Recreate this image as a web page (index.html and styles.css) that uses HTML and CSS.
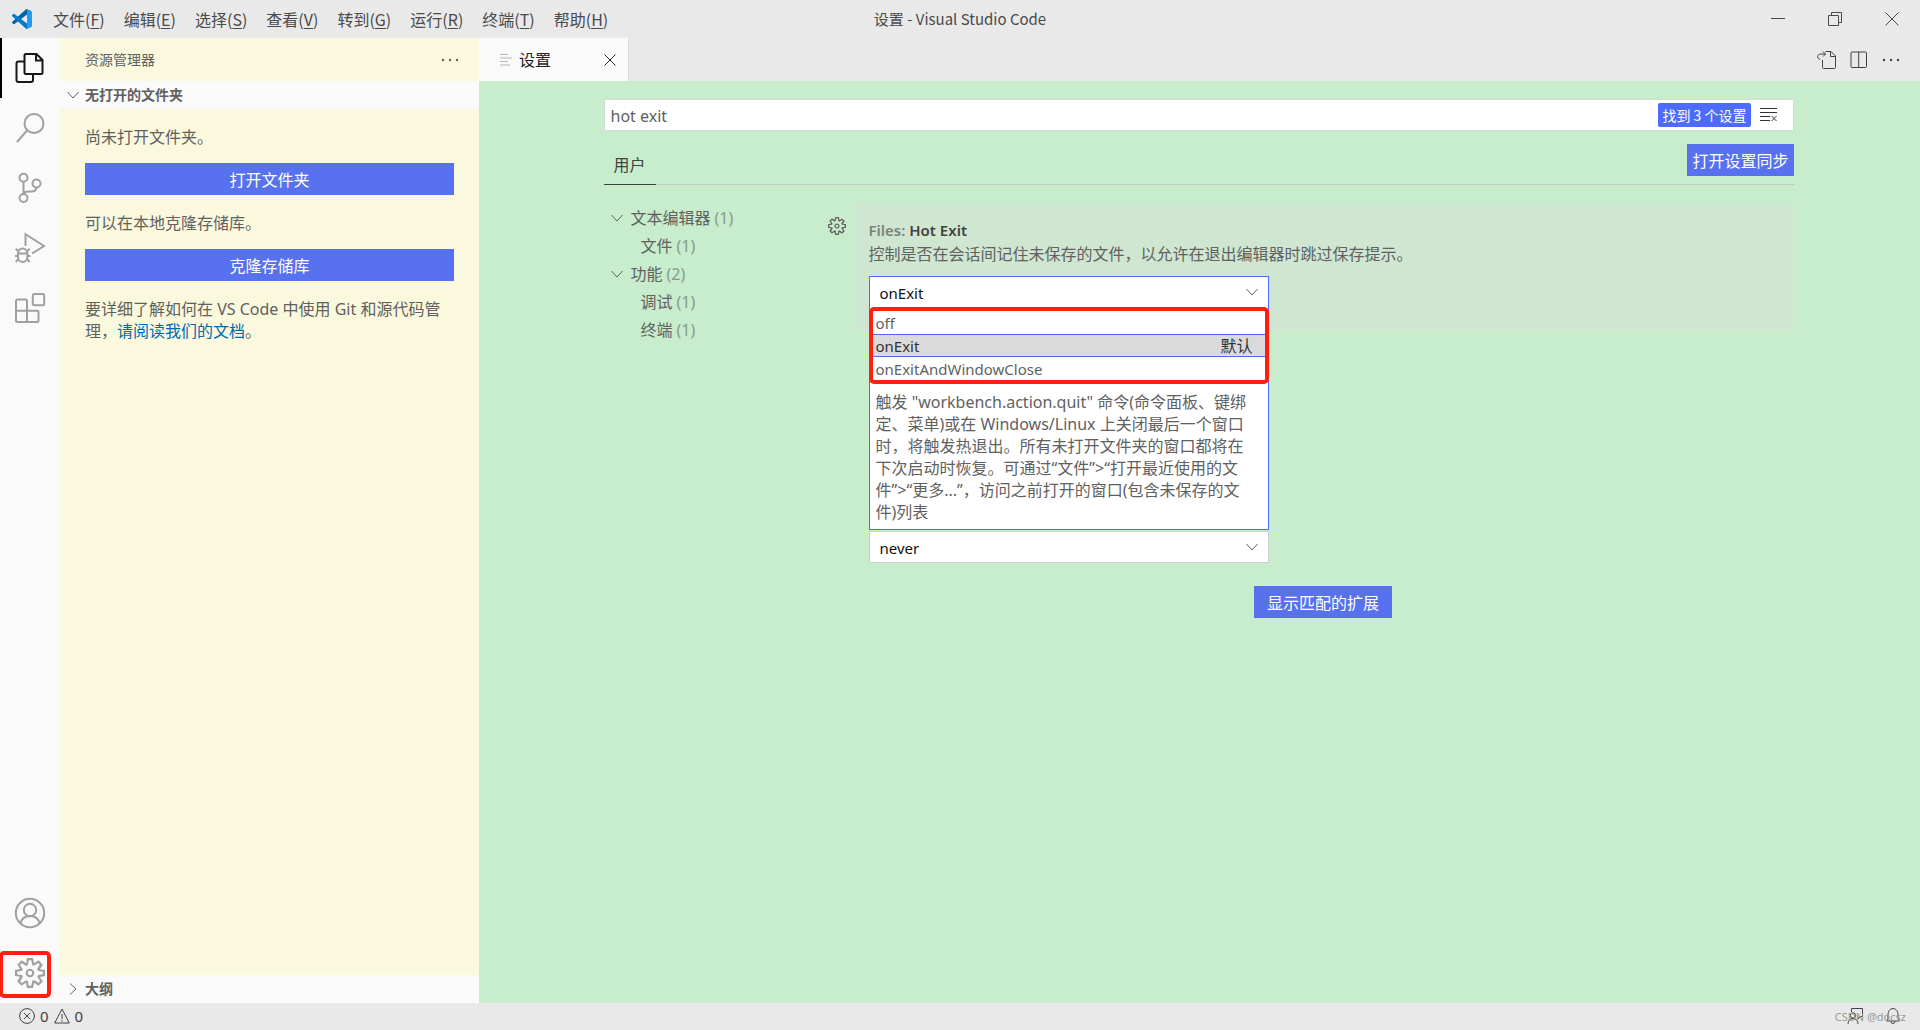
FILE: index.html
```html
<!DOCTYPE html>
<html lang="zh-CN">
<head>
<meta charset="utf-8">
<title>设置 - Visual Studio Code</title>
<link rel="stylesheet" href="styles.css">
</head>
<body>
<header class="titlebar">
  <div class="titlebar-left">
    <svg class="logo" viewBox="0 0 100 100" aria-hidden="true">
      <path fill="#0065a9" d="M96.46 10.8 75.86.88a6.25 6.25 0 0 0-7.11 1.2L1.3 63.58a4.17 4.17 0 0 0 0 6.17l5.51 5a4.17 4.17 0 0 0 5.32.24l81.23-61.62C96.09 11.3 100 13.25 100 16.67v-.24a6.25 6.25 0 0 0-3.54-5.63z"/>
      <path fill="#007acc" d="m96.46 89.2-20.6 9.92a6.25 6.25 0 0 1-7.11-1.2L1.3 36.42a4.17 4.17 0 0 1 0-6.17l5.51-5a4.17 4.17 0 0 1 5.32-.24l81.23 61.62c2.73 2.07 6.64.12 6.64-3.3v.24a6.25 6.25 0 0 1-3.54 5.63z"/>
      <path fill="#1f9cf0" d="M75.86 99.13a6.25 6.25 0 0 1-7.11-1.21C71.06 100.22 75 98.59 75 95.33V4.67c0-3.26-3.94-4.9-6.25-2.59a6.25 6.25 0 0 1 7.11-1.21l20.6 9.91a6.25 6.25 0 0 1 3.54 5.63v67.18a6.25 6.25 0 0 1-3.54 5.63z"/>
    </svg>
    <nav class="menu" aria-label="菜单">
      <button>文件(<u>F</u>)</button><button>编辑(<u>E</u>)</button><button>选择(<u>S</u>)</button><button>查看(<u>V</u>)</button><button>转到(<u>G</u>)</button><button>运行(<u>R</u>)</button><button>终端(<u>T</u>)</button><button>帮助(<u>H</u>)</button>
    </nav>
  </div>
  <div class="window-title">设置 - Visual Studio Code</div>
  <div class="window-controls">
    <button aria-label="最小化"><svg viewBox="0 0 14 14"><path d="M0 6.5h14"/></svg></button>
    <button aria-label="还原"><svg viewBox="0 0 14 14"><path d="M.5 3.5h10v10H.5zM3.5 3.500v-3h10v10h-3"/></svg></button>
    <button aria-label="关闭"><svg viewBox="0 0 14 14"><path d="m.5.5 13 13M13.500.5l-13 13"/></svg></button>
  </div>
</header>

<div class="workbench">
  <nav class="activitybar" aria-label="活动栏">
    <button class="active" aria-label="资源管理器"><svg viewBox="0 0 30 30"><path d="M11 1h10.500l6 6v12.500a1.500 1.500 0 0 1-1.500 1.500H11a1.500 1.500 0 0 1-1.500-1.500v-17A1.500 1.500 0 0 1 11 1zM21 1v6.500h6.500M9.500 8.500h-6a2 2 0 0 0-2 2V27a2 2 0 0 0 2 2H16a2 2 0 0 0 2-2v-6"/></svg></button>
    <button aria-label="搜索"><svg viewBox="0 0 30 30"><circle cx="19" cy="10.500" r="9.500"/><path d="M12 17.500 2 29"/></svg></button>
    <button aria-label="源代码管理"><svg viewBox="0 0 30 30"><circle cx="8.500" cy="4.800" r="4"/><circle cx="21.500" cy="10.500" r="4"/><circle cx="8.500" cy="25" r="4"/><path d="M8.500 9v12M21.500 14.500c-.5 3-2.500 4-5 4h-3c-2.500 0-4.500 1-5 2.500"/></svg></button>
    <button aria-label="运行和调试"><svg viewBox="0 0 30 30"><path d="M10.500 13V1.200L29 13l-12 7.500"/><path d="M3 20.500c0-3 2-5 4.700-5s4.700 2 4.700 5v3.500c0 3-2 5-4.700 5S3 27 3 24zM3 20.500h9.400M3.500 18.500.8 15.800M12 18.500l2.700-2.700M3 23H0M12.500 23h3M3.500 26 .8 29M12 26l2.700 3"/></svg></button>
    <button aria-label="扩展"><svg viewBox="0 0 30 30"><rect x="17.800" y="1" width="11.400" height="11.200" rx="1.500"/><path d="M2.500 6.500h8a1.500 1.500 0 0 1 1.500 1.500v9.800h10a1.500 1.500 0 0 1 1.500 1.500v8.200a1.500 1.500 0 0 1-1.500 1.500H2.500A1.500 1.500 0 0 1 1 27.500V8a1.500 1.500 0 0 1 1.500-1.500zM1 17.800h11V29"/></svg></button>
    <span class="spacer"></span>
    <button aria-label="帐户"><svg viewBox="0 0 30 30"><circle cx="15" cy="15" r="14.200"/><circle cx="15" cy="12" r="6.200"/><path d="M5.500 25.500c1-4.800 4.500-7.500 9.500-7.500s8.500 2.700 9.500 7.500"/></svg></button>
    <button class="manage" aria-label="管理"><svg class="solid" viewBox="1 1 14 14"><path d="M9.100 4.400 8.600 2H7.400l-.5 2.400-.7.3-2-1.300-.9.8 1.300 2-.2.7-2.400.5v1.200l2.400.5.3.8-1.300 2 .8.8 2-1.300.8.3.4 2.300h1.200l.5-2.400.8-.3 2 1.300.8-.8-1.300-2 .3-.8 2.300-.4V7.400l-2.400-.5-.3-.8 1.300-2-.8-.8-2 1.300-.7-.2zM9.400 1l.5 2.400L12 2.100l2 2-1.400 2.100 2.400.4v2.800l-2.400.5L14 12l-2 2-2.100-1.400-.5 2.400H6.600l-.5-2.400L4 13.900l-2-2 1.400-2.100L1 9.400V6.600l2.400-.5L2.100 4l2-2 2.100 1.400.4-2.400h2.800zm.6 7c0 1.100-.9 2-2 2s-2-.9-2-2 .9-2 2-2 2 .9 2 2zM8 9c.6 0 1-.4 1-1s-.4-1-1-1-1 .4-1 1 .4 1 1 1z"/></svg></button>
  </nav>

  <aside class="sidebar">
    <div class="sidebar-title"><h2>资源管理器</h2><button class="icon-button" aria-label="更多"><svg class="solid" viewBox="0 0 20 20"><circle cx="3" cy="10" r="1.200"/><circle cx="10" cy="10" r="1.200"/><circle cx="17" cy="10" r="1.200"/></svg></button></div>
    <button class="section"><svg viewBox="0 0 12 12"><path d="m.5 3 5.500 6 5.500-6"/></svg>无打开的文件夹</button>
    <div class="sidebar-body">
      <p>尚未打开文件夹。</p>
      <button class="primary">打开文件夹</button>
      <p>可以在本地克隆存储库。</p>
      <button class="primary">克隆存储库</button>
      <p>要详细了解如何在 VS Code 中使用 Git 和源代码管理，<a href="#docs">请阅读我们的文档</a>。</p>
    </div>
    <button class="section"><svg viewBox="0 0 12 12"><path d="m3 .5 6 5.500-6 5.500"/></svg>大纲</button>
  </aside>

  <main class="editor">
    <div class="tabs">
      <div class="tab">
        <svg class="tab-icon" viewBox="0 0 12 12"><path d="M0 .5h8M0 4h12M0 7.500h8M0 11h10"/></svg>
        <span>设置</span>
        <button aria-label="关闭选项卡"><svg viewBox="0 0 12 12"><path d="m.5.5 11 11M11.500.5l-11 11"/></svg></button>
      </div>
      <div class="tab-actions">
        <button class="icon-button" aria-label="打开设置(json)"><svg viewBox="0 0 20 20"><path d="M8.500 1.500H14l4.500 4.500v11.500a1 1 0 0 1-1 1h-11a1 1 0 0 1-1-1V10M13.500 1.500v5h5M3 9.500C-.5 8 0 4 4 4h4.500M6 1.500 8.500 4 6 6.500"/></svg></button>
        <button class="icon-button" aria-label="拆分编辑器"><svg viewBox="0 0 20 20"><rect x="2" y="2" width="15.500" height="15.500" rx="1"/><path d="M9.700 2v15.500"/></svg></button>
        <button class="icon-button" aria-label="更多操作"><svg class="solid" viewBox="0 0 20 20"><circle cx="3" cy="10" r="1.200"/><circle cx="10" cy="10" r="1.200"/><circle cx="17" cy="10" r="1.200"/></svg></button>
      </div>
    </div>

    <div class="settings">
      <div class="search">
        <input type="text" value="hot exit" aria-label="搜索设置">
        <span class="badge">找到 3 个设置</span>
        <button class="icon-button" aria-label="清除设置搜索输入"><svg viewBox="0 0 20 20"><path d="M1 3.500h17M1 7.500h17M1 11.500h10M1 15.500h10M12.500 11l5 5M17.500 11l-5 5"/></svg></button>
      </div>
      <div class="scope">
        <button class="scope-tab">用户</button>
        <button class="primary sync">打开设置同步</button>
      </div>
      <div class="settings-body">
        <ul class="toc">
          <li><svg viewBox="0 0 12 12"><path d="m.5 3 5.500 6 5.500-6"/></svg>文本编辑器 <span>(1)</span></li>
          <li class="child">文件 <span>(1)</span></li>
          <li><svg viewBox="0 0 12 12"><path d="m.5 3 5.500 6 5.500-6"/></svg>功能 <span>(2)</span></li>
          <li class="child">调试 <span>(1)</span></li>
          <li class="child">终端 <span>(1)</span></li>
        </ul>
        <div class="list">
          <section class="setting focused">
            <button class="gear" aria-label="更多操作"><svg class="solid" viewBox="1 1 14 14"><path d="M9.100 4.400 8.600 2H7.400l-.5 2.400-.7.3-2-1.300-.9.8 1.300 2-.2.7-2.400.5v1.200l2.400.5.3.8-1.300 2 .8.8 2-1.300.8.3.4 2.300h1.200l.5-2.400.8-.3 2 1.300.8-.8-1.300-2 .3-.8 2.300-.4V7.400l-2.400-.5-.3-.8 1.300-2-.8-.8-2 1.300-.7-.2zM9.400 1l.5 2.400L12 2.100l2 2-1.400 2.100 2.400.4v2.800l-2.400.5L14 12l-2 2-2.100-1.400-.5 2.400H6.600l-.5-2.400L4 13.900l-2-2 1.400-2.100L1 9.400V6.600l2.400-.5L2.100 4l2-2 2.100 1.400.4-2.400h2.800zm.6 7c0 1.100-.9 2-2 2s-2-.9-2-2 .9-2 2-2 2 .9 2 2zM8 9c.6 0 1-.4 1-1s-.4-1-1-1-1 .4-1 1 .4 1 1 1z"/></svg></button>
            <div class="setting-content">
              <label class="setting-title" for="hot-exit"><span>Files:</span> Hot Exit</label>
              <p class="setting-desc">控制是否在会话间记住未保存的文件，以允许在退出编辑器时跳过保存提示。</p>
              <div class="dropdown open">
                <select id="hot-exit"><option>off</option><option selected>onExit</option><option>onExitAndWindowClose</option></select>
                <svg class="arrow" viewBox="0 0 12 12"><path d="m.5 3 5.500 6 5.500-6"/></svg>
                <div class="popup">
                  <ul class="options">
                    <li>off</li>
                    <li class="selected">onExit<span>默认</span></li>
                    <li>onExitAndWindowClose</li>
                  </ul>
                  <p class="details">触发 "workbench.action.quit" 命令(命令面板、键绑定、菜单)或在 Windows/Linux 上关闭最后一个窗口时，将触发热退出。所有未打开文件夹的窗口都将在下次启动时恢复。可通过“文件”&gt;“打开最近使用的文件”&gt;“更多...”，访问之前打开的窗口(包含未保存的文件)列表</p>
                </div>
              </div>
            </div>
          </section>
          <section class="setting second">
            <div class="setting-content">
              <div class="dropdown">
                <select aria-label="设置值"><option>never</option></select>
                <svg class="arrow" viewBox="0 0 12 12"><path d="m.5 3 5.500 6 5.500-6"/></svg>
              </div>
            </div>
          </section>
          <button class="primary extensions">显示匹配的扩展</button>
        </div>
      </div>
    </div>
  </main>
</div>

<footer class="statusbar">
  <button class="problems">
    <svg viewBox="0 0 16 16"><circle cx="8" cy="8" r="7.400"/><path d="m5 5 6 6M11 5l-6 6"/></svg>0
    <svg viewBox="0 0 16 16"><path d="M8 1 15.300 15H.7zM8 6v5M8 12v1.500"/></svg>0
  </button>
  <div class="status-right">
    <button aria-label="反馈"><svg viewBox="0 0 16 16"><path d="M4.500 4V.5h11v8h-2L11 11V8.500"/><circle cx="6" cy="7.500" r="2.700"/><path d="M1 16c0-3.500 2-5.500 5-5.500s5 2 5 5.500"/></svg></button>
    <button aria-label="通知"><svg viewBox="0 0 16 16"><path d="M1.500 13h13c-1.500-1.500-1.500-3-1.500-6 0-4-2-6.400-5-6.400S3 3 3 7c0 3 0 4.500-1.500 6zM6 13.500a2 2 0 0 0 4 0"/></svg></button>
    <span class="watermark">CSDN @docsz</span>
  </div>
</footer>
</body>
</html>
```
FILE: styles.css
```css
*, ::before, ::after { box-sizing: border-box; }

body {
  margin: 0;
  min-height: 100vh;
  display: flex;
  flex-direction: column;
  font: 16px/22px "Noto Sans", "Noto Sans CJK SC", sans-serif;
  color: #616161;
  background: #c7edcc;
}

h2, p, ul { margin: 0; padding: 0; }
ul { list-style: none; }

button {
  margin: 0;
  padding: 0;
  border: 0;
  background: none;
  font: inherit;
  color: inherit;
  white-space: nowrap;
}

svg {
  display: block;
  flex: none;
  fill: none;
  stroke: currentColor;
  overflow: visible;
}
svg.solid { fill: currentColor; stroke: none; }

.icon-button { display: flex; }
.icon-button svg { width: 20px; height: 20px; }

.primary {
  height: 32px;
  padding: 2px 0 0;
  color: #fff;
  background: #5871ef;
  text-align: center;
}

/* Title bar */
.titlebar {
  display: grid;
  grid-template-columns: 1fr auto 1fr;
  align-items: center;
  height: 38px;
  background: #e9e9e9;
  color: #4a4a4a;
}
.titlebar-left { display: flex; align-items: center; padding-left: 12px; }
.logo { width: 20px; height: 20px; stroke: none; }
.menu { display: flex; gap: 19px; padding-left: 21px; font-family: "Noto Sans CJK SC", sans-serif; }
.menu u { text-underline-offset: 2px; }
.window-title { font-size: 15px; font-family: "Noto Sans CJK SC", sans-serif; }
.window-controls { display: flex; justify-content: flex-end; }
.window-controls button { display: flex; justify-content: center; width: 57px; }
.window-controls svg { width: 14px; height: 14px; }

/* Columns */
.workbench { flex: 1; display: flex; }

.activitybar {
  display: flex;
  flex-direction: column;
  width: 60px;
  background: #fafafa;
  color: #a0a0a0;
}
.activitybar button {
  position: relative;
  display: flex;
  align-items: center;
  justify-content: center;
  height: 60px;
}
.activitybar svg { width: 30px; height: 30px; stroke-width: 2; }
.activitybar .active { color: #17171b; }
.activitybar .active::before {
  content: "";
  position: absolute;
  left: 0;
  top: 0;
  width: 2px;
  height: 60px;
  background: #000;
}
.spacer { flex: 1; }
.manage::after {
  content: "";
  position: absolute;
  left: -1px;
  top: 8px;
  width: 52px;
  height: 47px;
  border: 4px solid #ff1f10;
  border-radius: 5px;
}

.sidebar {
  display: flex;
  flex-direction: column;
  width: 419px;
  background: #faf8dd;
}
.sidebar-title {
  display: flex;
  align-items: center;
  justify-content: space-between;
  height: 43px;
  padding: 0 19px 0 25px;
}
.sidebar-title h2 { font-size: 14px; font-weight: 400; }
.section {
  display: flex;
  align-items: center;
  gap: 6px;
  height: 28px;
  padding-left: 7px;
  background: #fafafa;
  font-size: 14px;
  font-weight: 700;
}
.section svg { width: 12px; height: 12px; }
.sidebar-body {
  flex: 1;
  display: flex;
  flex-direction: column;
  gap: 15px;
  padding: 17px 25px;
}
.sidebar-body p { padding-top: 2px; }
.sidebar-body p:first-child { padding: 0; }
.sidebar-body a { color: #006ab1; text-decoration: none; }

/* Editor */
.editor { flex: 1; min-width: 0; }
.tabs {
  display: flex;
  justify-content: space-between;
  height: 43px;
  background: #e9e9e9;
}
.tab {
  display: flex;
  align-items: center;
  gap: 7px;
  width: 150px;
  padding: 0 12px 0 21px;
  border-right: 1px solid #dcdcdc;
  background: #fafafa;
  color: #222;
}
.tab-icon { width: 12px; height: 12px; color: #b5b5b5; }
.tab button { margin-left: auto; }
.tab button svg { width: 12px; height: 12px; }
.tab-actions {
  display: flex;
  align-items: center;
  gap: 12px;
  padding-right: 19px;
  color: #424242;
}

.settings { max-width: 1192px; margin: 0 auto; padding: 18px 2px 0 0; }
.search {
  display: flex;
  align-items: center;
  gap: 8px;
  height: 32px;
  padding: 0 14px 0 6px;
  border: 1px solid #d5dcd6;
  background: #fff;
}
.search input {
  flex: 1;
  min-width: 0;
  padding: 2px 0 0;
  border: 0;
  outline: 0;
  background: none;
  font: inherit;
  color: #616161;
}
.search .icon-button { color: #333; }
.badge {
  padding: 0 4px;
  border-radius: 2px;
  background: #4d6bff;
  color: #fff;
  font-family: "Noto Sans CJK SC", sans-serif;
  font-size: 14px;
  line-height: 24px;
}
.scope {
  display: flex;
  align-items: flex-end;
  justify-content: space-between;
  height: 54px;
  border-bottom: 1px solid #c8c8c8;
}
.scope-tab {
  height: 40px;
  padding: 0 10px;
  margin-bottom: -1px;
  border-bottom: 1px solid #424242;
  color: #424242;
}
.sync { padding: 2px 5px 0; margin-bottom: 8px; }

.settings-body { display: flex; padding-top: 18px; }
.toc { width: 217px; padding: 1px 0 0 7px; }
.toc li { display: flex; align-items: center; gap: 8px; line-height: 28px; }
.toc li span { margin-left: -4px; color: #889a8b; }
.toc svg { width: 12px; height: 12px; }
.toc .child { padding-left: 30px; }

.list { flex: 1; min-width: 0; display: flex; flex-direction: column; }
.setting { display: flex; }
.gear { width: 32px; height: 18px; margin-top: 14px; display: flex; justify-content: center; }
.gear svg { width: 18px; height: 18px; }
.setting-content { flex: 1; padding: 16px; }
.focused .setting-content { height: 128px; background: #cfe6d1; }
.setting-title { display: block; font-size: 15px; font-weight: 600; color: #424242; }
.setting-title span { color: #7a837b; }
.setting-desc { padding: 2px 0 11px; }
.dropdown { position: relative; width: 400px; max-width: 100%; }
.dropdown select {
  display: block;
  width: 100%;
  height: 32px;
  padding: 2px 10px 0;
  border: 1px solid #cecece;
  border-radius: 0;
  outline: 0;
  appearance: none;
  background: #fff;
  color: #111;
  font: inherit;
  font-size: 15px;
}
.open select { border-color: #4d6bff; }
.arrow { position: absolute; right: 11px; top: 10px; width: 12px; height: 12px; }

.popup {
  position: absolute;
  z-index: 1;
  top: 31px;
  left: 0;
  width: 100%;
  border: 1px solid #4d6bff;
  border-top: 0;
  background: #fff;
}
.options {
  margin: 0 -1px;
  border: 4px solid #ff1f10;
  border-radius: 5px;
  font-size: 15px;
}
.options li {
  display: flex;
  justify-content: space-between;
  height: 23px;
  padding: 1px 12px 0 3px;
}
.options .selected {
  padding-top: 0;
  border: 1px solid #4d6bff;
  border-width: 1px 0;
  background: #dadada;
  color: #333;
}
.options .selected span { font-size: 16px; }
.details { padding: 7px 16px 6px 6px; }

.second { padding-left: 32px; padding-top: 184px; }
.extensions { align-self: center; padding: 2px 13px 0; margin-top: 7px; margin-left: 32px; }

/* Status bar */
.statusbar {
  display: flex;
  align-items: center;
  justify-content: space-between;
  height: 27px;
  padding: 0 19px 2px;
  background: #e9e9e9;
  color: #424242;
  font-size: 15px;
}
.statusbar svg { width: 16px; height: 16px; }
.problems { display: flex; align-items: center; gap: 5px; }
.status-right { position: relative; display: flex; gap: 22px; }
.watermark {
  position: absolute;
  right: -5px;
  top: -1px;
  font-size: 11px;
  line-height: 20px;
  color: #999;
  white-space: nowrap;
}
```
